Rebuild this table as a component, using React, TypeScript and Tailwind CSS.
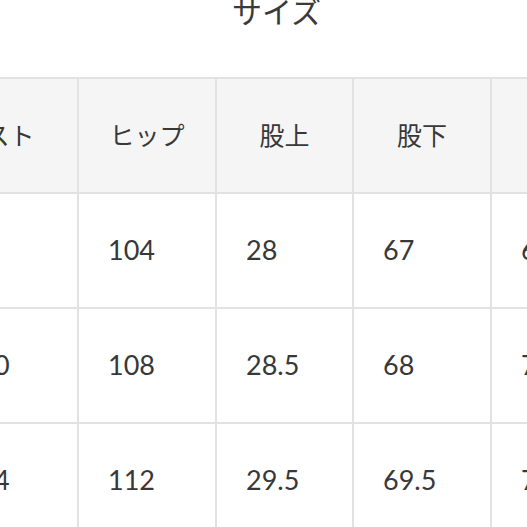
import React from "react";

const headers = ["ウエスト", "ヒップ", "股上", "股下", "わたり", "裾幅"];
const rows = [
  ["76", "104", "28", "67", "6.5", "18"],
  ["78-80", "108", "28.5", "68", "7", "19"],
  ["82-84", "112", "29.5", "69.5", "7.5", "20"],
  ["86-88", "116", "30", "70", "8", "21"],
];

export default function App() {
  return (
    <div
      className="w-[527px] h-[527px] overflow-hidden bg-white text-[#383838]"
      style={{ fontFamily: "Lato, 'Noto Sans CJK JP', sans-serif" }}
    >
      <div className="w-[553px] h-[45px] mt-[-11px] text-center text-[30px] leading-[45px] text-[#3a3a3a]">
        サイズ
      </div>
      <div className="mt-[43px] ml-[-92px] w-[900px] grid grid-cols-[171px_138px_137px_138px_137px_137px] border-t-2 border-[#e2e2e2]">
        {headers.map((h, i) => (
          <div
            key={h}
            className={`h-[115px] bg-[#f5f5f5] border-r-2 border-b-2 border-[#e2e2e2] flex items-center justify-center text-[25px] ${
              i === 0 ? "pr-[16px]" : i === 4 ? "pl-[10px]" : ""
            }`}
          >
            {h}
          </div>
        ))}
        {rows.map((r, ri) =>
          r.map((v, ci) => (
            <div
              key={ri + "-" + ci}
              className="h-[115px] bg-white border-r-2 border-b-2 border-[#e2e2e2] flex items-center pl-[29px] text-[27px]"
            >
              {v}
            </div>
          ))
        )}
      </div>
    </div>
  );
}
